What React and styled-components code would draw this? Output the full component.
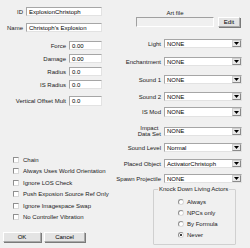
import React from 'react';
import styled, { createGlobalStyle } from 'styled-components';

const GlobalStyle = createGlobalStyle`
	html, body {
		margin: 0;
		padding: 0;
		background: #f0f0f0;
	}
	* {
		box-sizing: border-box;
	}
`;

const numberFields = [
	{ label: 'Force', value: '0.00' },
	{ label: 'Damage', value: '0.00' },
	{ label: 'Radius', value: '0.0' },
	{ label: 'IS Radius', value: '0.0' },
];

const flags = [
	'Chain',
	'Always Uses World Orientation',
	'Ignore LOS Check',
	'Push Exposion Source Ref Only',
	'Ignore Imagespace Swap',
	'No Controller Vibration',
];

const combos = [
	{ label: 'Light', value: 'NONE', mt: 12 },
	{ label: 'Enchantment', value: 'NONE', mt: 9 },
	{ label: 'Sound 1', value: 'NONE', mt: 9 },
	{ label: 'Sound 2', value: 'NONE', mt: 8 },
	{ label: 'IS Mod', value: 'NONE', mt: 6, indent: 1 },
	{ label: ['Impact', 'Data Set'], value: 'NONE', mt: 8 },
	{ label: 'Sound Level', value: 'Normal', mt: 6 },
	{ label: 'Placed Object', value: 'ActivatorChristoph', mt: 7 },
	{ label: 'Spawn Projectile', value: 'NONE', mt: 6 },
];

const knockDown = ['Always', 'NPCs only', 'By Formula', 'Never'];

export default function App() {
	return (
		<>
			<GlobalStyle />
			<Dialog>
				<LeftColumn>
					<FieldRow $mt={7}>
						<Label $w={23}>ID</Label>
						<TextBox $w={76}>ExplosionChristoph</TextBox>
					</FieldRow>
					<FieldRow $mt={7}>
						<Label $w={23}>Name</Label>
						<TextBox $w={76}>Christoph's Explosion</TextBox>
					</FieldRow>

					<NumberList>
						{numberFields.map((f) => (
							<FieldRow key={f.label}>
								<Label $w={66}>{f.label}</Label>
								<TextBox $w={33}>{f.value}</TextBox>
							</FieldRow>
						))}
					</NumberList>
					<FieldRow $mt={7}>
						<Label $w={66}>Vertical Offset Mult</Label>
						<TextBox $w={33} $h={10}>0.0</TextBox>
					</FieldRow>

					<FlagList>
						{flags.map((f) => (
							<FlagRow key={f}>
								<CheckBox />
								<span>{f}</span>
							</FlagRow>
						))}
					</FlagList>

					<ButtonBar>
						<Button $w={38}>OK</Button>
						<Button $w={41}>Cancel</Button>
					</ButtonBar>
				</LeftColumn>

				<RightColumn>
					<ArtFile>
						<ArtLabel>Art file</ArtLabel>
						<ArtRow>
							<ArtBox />
							<Button $w={22} $h={10}>Edit</Button>
						</ArtRow>
					</ArtFile>

					{combos.map((c) => (
						<FieldRow key={String(c.label)} $mt={c.mt}>
							<ComboLabel>
								{Array.isArray(c.label) ? (
									<Stacked>
										<span>{c.label[0]}</span>
										<span>{c.label[1]}</span>
									</Stacked>
								) : (
									c.label
								)}
							</ComboLabel>
							<Combo $indent={c.indent}>
								<ComboText>{c.value}</ComboText>
								<ComboArrow>
									<svg width="5" height="3" viewBox="0 0 5 3">
										<path d="M0 0h5L2.5 3z" fill="#000" />
									</svg>
								</ComboArrow>
							</Combo>
						</FieldRow>
					))}

					<GroupBox>
						<Legend>Knock Down Living Actors</Legend>
						{knockDown.map((k) => (
							<RadioRow key={k}>
								<Radio $checked={k === 'Never'} />
								<span>{k}</span>
							</RadioRow>
						))}
					</GroupBox>
				</RightColumn>
			</Dialog>
		</>
	);
}

const Dialog = styled.div`
	display: flex;
	width: 250px;
	height: 248px;
	overflow: hidden;
	background: #f0f0f0;
	font-family: 'Liberation Sans', Arial, sans-serif;
	font-size: 6px;
	color: #1a1a1a;
`;

const LeftColumn = styled.div`
	display: flex;
	flex-direction: column;
	width: 125px;
	flex: none;
`;

const RightColumn = styled.div`
	display: flex;
	flex-direction: column;
	flex: 1;
	min-width: 0;
`;

const FieldRow = styled.div`
	display: flex;
	align-items: center;
	gap: 3px;
	margin-top: ${(p) => p.$mt || 0}px;
`;

const Label = styled.div`
	width: ${(p) => p.$w}px;
	flex: none;
	display: flex;
	justify-content: flex-end;
	white-space: nowrap;
`;

const TextBox = styled.div`
	width: ${(p) => p.$w}px;
	height: ${(p) => p.$h || 9}px;
	flex: none;
	display: flex;
	align-items: center;
	padding-left: 2px;
	background: #fff;
	border: 1px solid #a6a6a6;
	border-right-color: #e2e2e2;
	border-bottom-color: #e2e2e2;
	color: #000;
	white-space: nowrap;
	overflow: hidden;
`;

const NumberList = styled.div`
	display: flex;
	flex-direction: column;
	gap: 4px;
	margin-top: 9px;
`;

const FlagList = styled.div`
	display: flex;
	flex-direction: column;
	gap: 4.6px;
	margin-top: 50px;
	padding-left: 13px;
`;

const FlagRow = styled.div`
	display: flex;
	align-items: center;
	gap: 4px;
	height: 7px;
	white-space: nowrap;
`;

const CheckBox = styled.div`
	width: 6px;
	height: 6px;
	flex: none;
	background: #fff;
	border: 1px solid #8e8e8e;
	border-right-color: #d8d8d8;
	border-bottom-color: #d8d8d8;
`;

const ButtonBar = styled.div`
	display: flex;
	gap: 3px;
	margin-top: 11px;
	padding-left: 3px;
`;

const Button = styled.div`
	width: ${(p) => p.$w}px;
	height: ${(p) => p.$h || 10}px;
	flex: none;
	display: flex;
	align-items: center;
	justify-content: center;
	background: #e4e4e4;
	border: 1px solid #a9a9a9;
	border-top-color: #fff;
	border-left-color: #fff;
	box-shadow: 1px 1px 0 #7a7a7a;
	color: #000;
`;

const ArtFile = styled.div`
	display: flex;
	flex-direction: column;
	padding-left: 11px;
	margin-top: 10px;
`;

const ArtLabel = styled.div`
	width: 78px;
	text-align: center;
	line-height: 7px;
`;

const ArtRow = styled.div`
	display: flex;
	align-items: center;
	gap: 4px;
`;

const ArtBox = styled.div`
	width: 78px;
	height: 10px;
	border: 1px solid #a0a0a0;
	border-right-color: #fff;
	border-bottom-color: #fff;
	background: #f0f0f0;
`;

const ComboLabel = styled.div`
	width: 36px;
	flex: none;
	display: flex;
	justify-content: flex-end;
	white-space: nowrap;
`;

const Stacked = styled.div`
	display: flex;
	flex-direction: column;
	align-items: center;
	line-height: 6px;
`;

const Combo = styled.div`
	width: 78px;
	height: ${(p) => (p.$indent ? 10 : 9)}px;
	flex: none;
	display: flex;
	align-items: stretch;
	background: #fff;
	border: 1px solid #a6a6a6;
	border-right-color: #e2e2e2;
	border-bottom-color: #e2e2e2;
	color: #000;
`;

const ComboText = styled.div`
	flex: 1;
	display: flex;
	align-items: center;
	padding-left: 2px;
	white-space: nowrap;
	overflow: hidden;
`;

const ComboArrow = styled.div`
	width: 9px;
	flex: none;
	display: flex;
	align-items: center;
	justify-content: center;
	background: #e8e8e8;
	border: 1px solid #cfcfcf;
	border-right-color: #8a8a8a;
	border-bottom-color: #8a8a8a;
`;

const GroupBox = styled.fieldset`
	display: flex;
	flex-direction: column;
	gap: 4px;
	margin: 3px 0 0 28px;
	padding: 5px 0 6px 24px;
	width: 83px;
	border: 1px solid #d0d0d0;
	border-radius: 1px;
	min-width: 0;
`;

const Legend = styled.legend`
	padding: 0 1px;
	margin-left: -20px;
	line-height: 7px;
	white-space: nowrap;
`;

const RadioRow = styled.div`
	display: flex;
	align-items: center;
	gap: 3px;
	height: 7px;
	white-space: nowrap;
`;

const Radio = styled.div`
	width: 6px;
	height: 6px;
	flex: none;
	border-radius: 50%;
	background: #fff;
	border: 1px solid #8e8e8e;
	border-right-color: #d8d8d8;
	border-bottom-color: #d8d8d8;
	display: flex;
	align-items: center;
	justify-content: center;

	&::after {
		content: '';
		width: 2px;
		height: 2px;
		border-radius: 50%;
		background: ${(p) => (p.$checked ? '#000' : 'transparent')};
	}
`;
